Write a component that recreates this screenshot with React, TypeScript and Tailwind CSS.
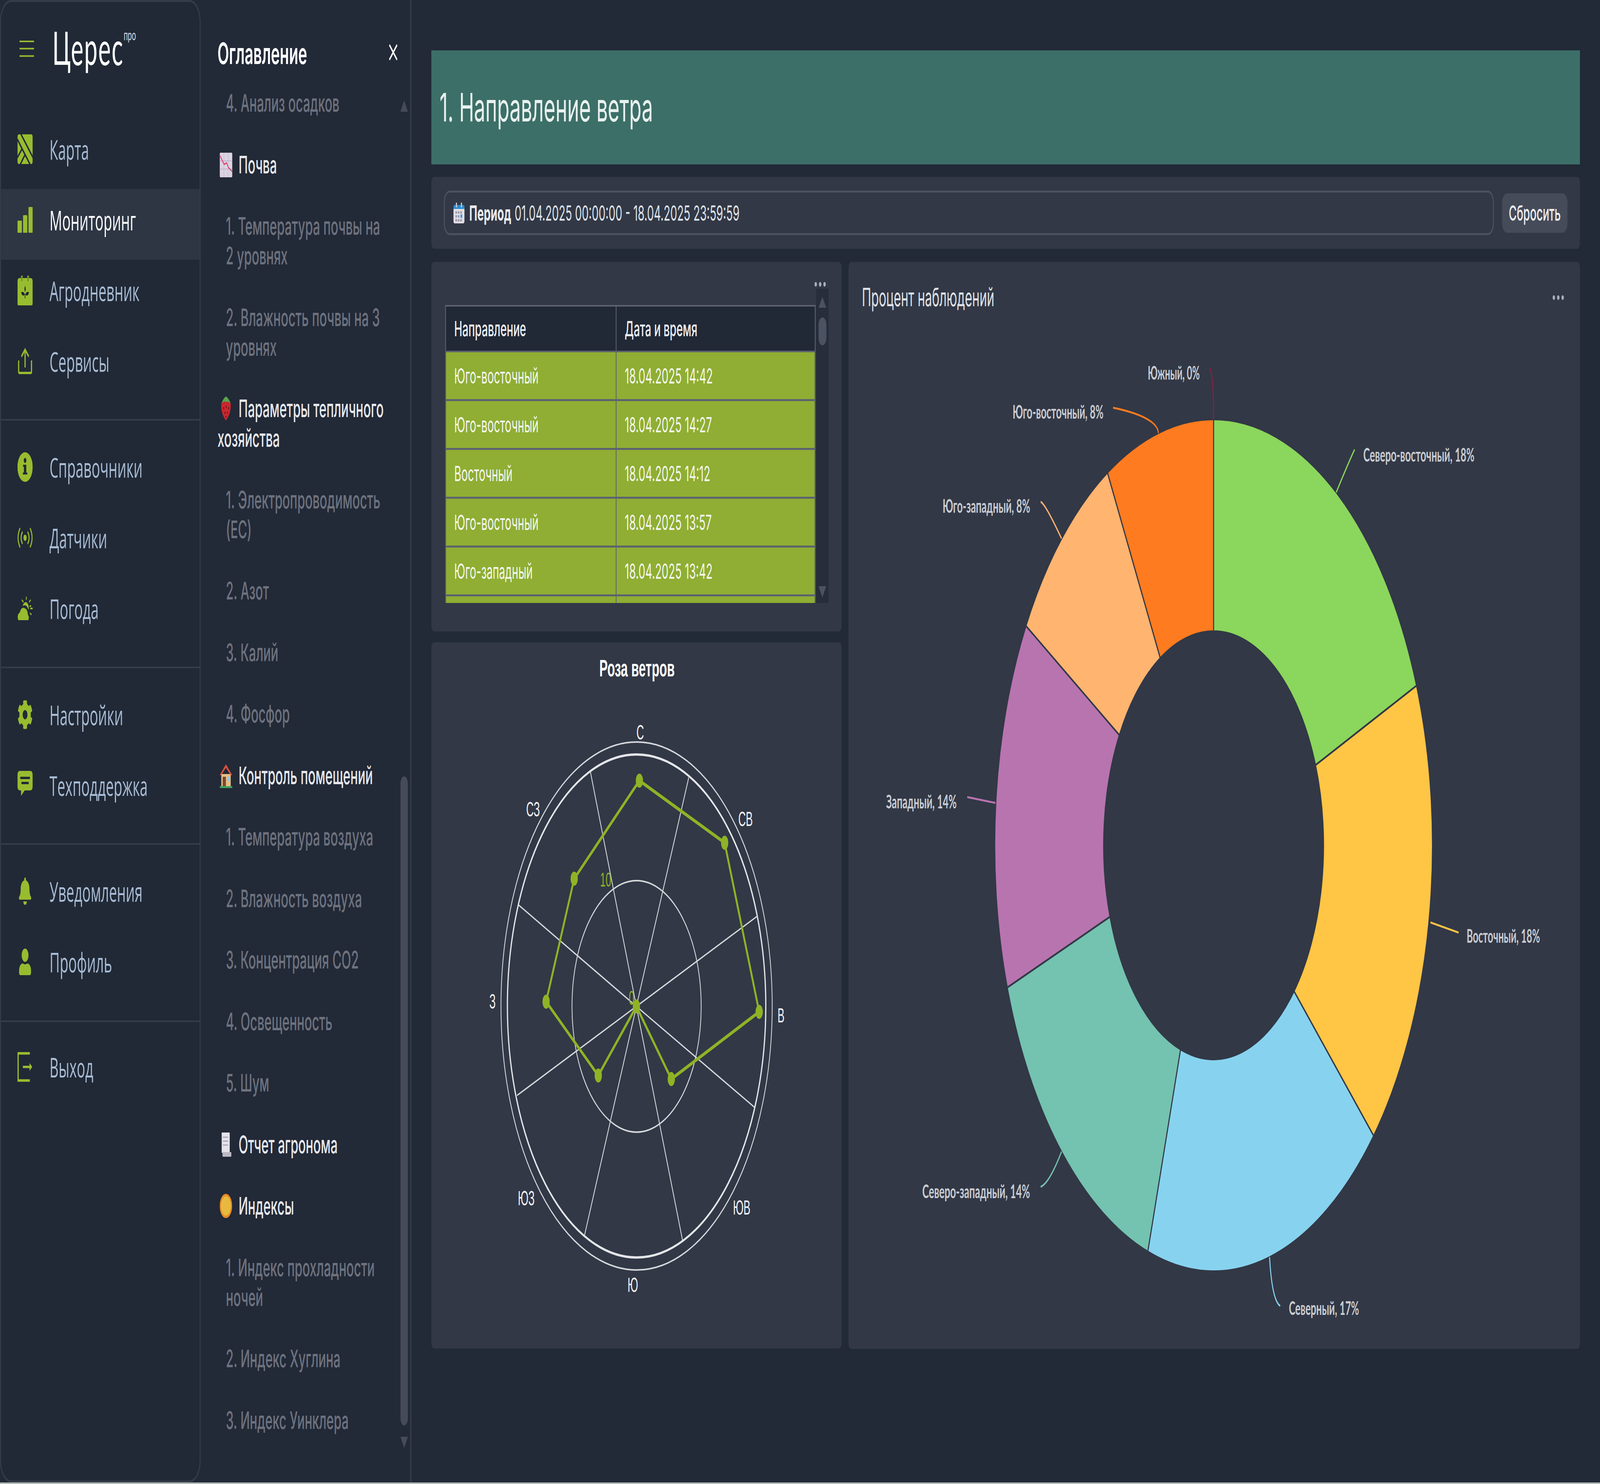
import React from 'react';
import { FaBell, FaCog, FaUser } from 'react-icons/fa';

const G = '#98bc2f';
const D = '#212936';

const Ic = ({ children, vb = '0 0 76 76', h = 76 }: { children: React.ReactNode; vb?: string; h?: number }) => (
  <svg viewBox={vb} width={76} height={h} className="shrink-0">{children}</svg>
);

const MapIcon = () => (
  <Ic>
    <rect width="76" height="76" rx="7" fill={G} />
    <g stroke={D} strokeWidth="5.5" fill="none">
      <path d="M16 -2 L78 60" />
      <path d="M0 13 L23 37 L-1 60" />
      <path d="M13 78 L38 52 L64 78" />
      <path d="M23 37 L38 52" />
    </g>
  </Ic>
);
const BarsIcon = () => (
  <Ic vb="0 0 76 66" h={66}>
    <rect x="0" y="35" width="22" height="31" rx="2" fill={G} />
    <rect x="28" y="21" width="21" height="45" rx="2" fill={G} />
    <rect x="55" y="0" width="21" height="66" rx="2" fill={G} />
  </Ic>
);
const DiaryIcon = () => (
  <Ic>
    <path d="M10 6 H66 Q76 6 76 16 V70 Q76 76 70 76 H6 Q0 76 0 70 V16 Q0 6 10 6 Z" fill={G} />
    <path d="M22 0 V16 M53 0 V16" stroke={G} strokeWidth="8" />
    <path d="M22 2 V14 M53 2 V14" stroke={D} strokeWidth="2" />
    <path d="M38 26 Q44 34 38 42 Q32 34 38 26 Z" fill={D} />
    <path d="M18 43 Q30 38 37 48 Q26 56 18 43 Z M58 43 Q46 38 39 48 Q50 56 58 43 Z" fill={D} />
    <path d="M38 48 V58" stroke={D} strokeWidth="3" />
  </Ic>
);
const UploadIcon = () => (
  <Ic vb="0 0 76 68" h={68}>
    <path d="M6 32 V60 Q6 64 10 64 H66 Q70 64 70 60 V32" fill="none" stroke={G} strokeWidth="6" />
    <path d="M38 50 V5 M20 22 L38 4 L56 22" fill="none" stroke={G} strokeWidth="6" />
  </Ic>
);
const InfoIcon = () => (
  <Ic>
    <circle cx="38" cy="38" r="38" fill={G} />
    <rect x="32" y="32" width="12" height="24" rx="1" fill={D} />
    <rect x="28" y="32" width="10" height="5" fill={D} />
    <rect x="27" y="52" width="22" height="5" fill={D} />
    <circle cx="38" cy="21" r="6.5" fill={D} />
  </Ic>
);
const SensorIcon = () => (
  <Ic vb="0 0 76 54" h={54}>
    <circle cx="38" cy="27" r="8" fill={G} />
    <g fill="none" stroke={G} strokeWidth="5" strokeLinecap="round">
      <path d="M24 13 Q12 27 24 41" />
      <path d="M52 13 Q64 27 52 41" />
      <path d="M12 4 Q-6 27 12 50" />
      <path d="M64 4 Q82 27 64 50" />
    </g>
  </Ic>
);
const WeatherIcon = () => (
  <Ic vb="0 0 76 60" h={60}>
    <path d="M4 60 Q-4 46 12 40 Q20 24 38 30 Q50 32 52 46 Q60 52 54 60 Z" fill={G} />
    <path d="M26 24 Q32 12 44 14 Q58 18 56 34 Q50 28 46 24 Q36 20 26 24 Z" fill={G} />
    <path d="M44 0 V8 M22 8 L30 14 M66 8 L58 14 M64 30 H76 M62 42 L70 46 M60 24 H68" stroke={G} strokeWidth="4" fill="none" />
  </Ic>
);
const ChatIcon = () => (
  <Ic vb="0 0 76 74" h={74}>
    <path d="M12 0 H64 Q76 0 76 12 V38 Q76 50 64 50 H36 L18 64 L18 50 H12 Q0 50 0 38 V12 Q0 0 12 0 Z" fill={G} />
    <rect x="14" y="15" width="48" height="6" fill={D} />
    <rect x="20" y="28" width="36" height="6" fill={D} />
  </Ic>
);
const ExitIcon = () => (
  <Ic>
    <path d="M63 3 H3 V73 H63" fill="none" stroke={G} strokeWidth="7" transform="scale(0.98 1)" />
    <path d="M27 38 H66" stroke={G} strokeWidth="6" />
    <path d="M60 28 L74 38 L60 48 Z" fill={G} />
  </Ic>
);

const groups: { label: string; icon: React.ReactNode; active?: boolean }[][] = [
  [
    { label: 'Карта', icon: <MapIcon /> },
    { label: 'Мониторинг', icon: <BarsIcon />, active: true },
    { label: 'Агродневник', icon: <DiaryIcon /> },
    { label: 'Сервисы', icon: <UploadIcon /> },
  ],
  [
    { label: 'Справочники', icon: <InfoIcon /> },
    { label: 'Датчики', icon: <SensorIcon /> },
    { label: 'Погода', icon: <WeatherIcon /> },
  ],
  [
    { label: 'Настройки', icon: <FaCog size={76} color={G} className="shrink-0" /> },
    { label: 'Техподдержка', icon: <ChatIcon /> },
  ],
  [
    { label: 'Уведомления', icon: <FaBell size={70} color={G} className="shrink-0 mx-[3px]" /> },
    { label: 'Профиль', icon: <FaUser size={68} color={G} className="shrink-0 mx-[4px]" /> },
  ],
  [{ label: 'Выход', icon: <ExitIcon /> }],
];

const groupCls = [
  'pb-[46px] border-b-[4px] border-[#353c4a]',
  'pt-[40px] pb-[47px] border-b-[4px] border-[#353c4a]',
  'pt-[40px] pb-[46px] border-b-[4px] border-[#353c4a]',
  'pt-[40px] pb-[48px] border-b-[4px] border-[#353c4a]',
  'pt-[36px]',
];

const Sidebar = () => (
  <aside className="w-[1000px] h-full shrink-0 rounded-[56px] border-[5px] border-[#353c4a] bg-[#212936] flex flex-col">
    <div className="h-[298px] shrink-0 flex items-start">
      <svg width="73" height="42" viewBox="0 0 73 42" className="ml-[92px] mt-[99px] shrink-0">
        <path d="M0 2 H73 M0 20.5 H73 M0 39.5 H73" stroke={G} strokeWidth="4" />
      </svg>
      <div className="ml-[91px] mt-[58px] flex items-start">
        <span className="font-['Lato',sans-serif] font-normal text-[118px] leading-[118px] text-white tracking-[4px]">Церес</span>
        <span className="font-['Lato',sans-serif] text-[36px] leading-[36px] text-[#d8dadf] mt-[8px]">про</span>
      </div>
    </div>
    {groups.map((g, i) => (
      <div key={i} className={groupCls[i]}>
        {g.map((n) => (
          <div key={n.label} className={`h-[181px] flex items-center pl-[82px] pb-[24px] ${n.active ? 'bg-[#2e3644]' : ''}`}>
            <div className="w-[76px] flex justify-center shrink-0">{n.icon}</div>
            <span className={`ml-[84px] font-['Open_Sans',sans-serif] text-[70px] leading-none ${n.active ? 'text-white' : 'text-[#a9bdd6]'}`}>{n.label}</span>
          </div>
        ))}
      </div>
    ))}
  </aside>
);

const EmojiBox = ({ children }: { children: React.ReactNode }) => (
  <svg viewBox="0 0 63 63" className="inline-block w-[63px] h-[63px] ml-[11px] mr-[31px] align-[-10px]">{children}</svg>
);
const Chart = () => (
  <EmojiBox>
    <rect width="63" height="63" rx="4" fill="#dcd3e2" />
    <path d="M21 0 V63 M42 0 V63 M0 21 H63 M0 42 H63" stroke="#b5a9c0" strokeWidth="1.5" />
    <path d="M2 8 L22 30 L34 26 L44 38 L62 48" stroke="#d9436e" strokeWidth="3.5" fill="none" />
  </EmojiBox>
);
const Berry = () => (
  <EmojiBox>
    <path d="M8 18 Q31 8 55 18 Q58 42 31 62 Q4 42 8 18 Z" fill="#c8282e" />
    <path d="M8 18 Q20 4 31 0 Q44 4 55 18 Q42 12 31 14 Q20 12 8 18 Z" fill="#5aa34a" />
    <g fill="#5c1015">
      <circle cx="20" cy="30" r="2.5" /><circle cx="32" cy="27" r="2.5" /><circle cx="44" cy="30" r="2.5" />
      <circle cx="26" cy="42" r="2.5" /><circle cx="38" cy="42" r="2.5" /><circle cx="31" cy="52" r="2.5" />
    </g>
  </EmojiBox>
);
const House = () => (
  <EmojiBox>
    <rect x="8" y="27" width="47" height="32" fill="#e8bd85" />
    <path d="M31 2 L0 30 L8 30 L31 11 L55 30 L63 30 Z" fill="#d8513c" />
    <rect x="15" y="34" width="16" height="25" fill="#7a4a2e" />
    <rect x="38" y="34" width="13" height="11" fill="#8fc8e6" />
    <rect y="58" width="63" height="5" fill="#3fa35c" />
  </EmojiBox>
);
const Scroll = () => (
  <EmojiBox>
    <path d="M10 0 H50 V52 H10 Z" fill="#e5e3eb" />
    <path d="M16 12 H42 M16 22 H42 M16 32 H42" stroke="#aaa6b4" strokeWidth="3" />
    <rect x="14" y="50" width="44" height="12" rx="2" fill="#bdb9c6" />
  </EmojiBox>
);
const Sun = () => (
  <EmojiBox>
    <circle cx="31" cy="31" r="31" fill="#e88a26" />
    <circle cx="31" cy="31" r="25" fill="#e8b93f" />
  </EmojiBox>
);

type T = { lines: string[]; head?: boolean; emoji?: React.ReactNode };
const toc: T[] = [
  { lines: ['4. Анализ осадков'] },
  { lines: ['Почва'], head: true, emoji: <Chart /> },
  { lines: ['1. Температура почвы на', '2 уровнях'] },
  { lines: ['2. Влажность почвы на 3', 'уровнях'] },
  { lines: ['Параметры тепличного', 'хозяйства'], head: true, emoji: <Berry /> },
  { lines: ['1. Электропроводимость', '(EC)'] },
  { lines: ['2. Азот'] },
  { lines: ['3. Калий'] },
  { lines: ['4. Фосфор'] },
  { lines: ['Контроль помещений'], head: true, emoji: <House /> },
  { lines: ['1. Температура воздуха'] },
  { lines: ['2. Влажность воздуха'] },
  { lines: ['3. Концентрация CO2'] },
  { lines: ['4. Освещенность'] },
  { lines: ['5. Шум'] },
  { lines: ['Отчет агронома'], head: true, emoji: <Scroll /> },
  { lines: ['Индексы'], head: true, emoji: <Sun /> },
  { lines: ['1. Индекс прохладности', 'ночей'] },
  { lines: ['2. Индекс Хуглина'] },
  { lines: ['3. Индекс Уинклера'] },
];

const Toc = () => (
  <section className="w-[1050px] h-full shrink-0 border-r-[5px] border-[#3a4150] flex flex-col">
    <div className="h-[226px] shrink-0 flex justify-between items-start pl-[84px] pr-[63px] pt-[94px]">
      <span className="text-[75px] leading-[86px] font-semibold text-white">Оглавление</span>
      <svg width="44" height="44" viewBox="0 0 44 44" className="mt-[18px]">
        <path d="M3 3 L41 41 M41 3 L3 41" stroke="#fff" strokeWidth="5.5" />
      </svg>
    </div>
    <div className="flex justify-between pl-[84px] pr-[12px]">
      <div className="flex flex-col gap-[81.5px]">
        {toc.map((t) => (
          <div
            key={t.lines[0]}
            className={`text-[62px] leading-[76px] ${t.head ? 'text-[#e6e8ec] font-medium' : 'pl-[42px] text-[#6d727e] font-medium'}`}
          >
            {t.emoji}
            {t.lines[0]}
            {t.lines[1] && <br />}
            {t.lines[1]}
          </div>
        ))}
      </div>
      <div className="w-[37px] flex flex-col items-center mt-[31px]">
        <svg width="37" height="29" viewBox="0 0 37 29"><path d="M18.5 0 L37 29 H0 Z" fill="#454b59" /></svg>
        <div className="mt-[1702px] w-[37px] h-[1662px] rounded-[19px] bg-[#454b59]" />
        <svg width="37" height="29" viewBox="0 0 37 29" className="mt-[29px]"><path d="M18.5 29 L37 0 H0 Z" fill="#454b59" /></svg>
      </div>
    </div>
  </section>
);

const rows = [
  ['Юго-восточный', '18.04.2025 14:42'],
  ['Юго-восточный', '18.04.2025 14:27'],
  ['Восточный', '18.04.2025 14:12'],
  ['Юго-восточный', '18.04.2025 13:57'],
  ['Юго-западный', '18.04.2025 13:42'],
  ['', ''],
];

const Dots = () => (
  <svg width="56" height="12" viewBox="0 0 56 12">
    <circle cx="6" cy="6" r="6" fill="#aab0ba" /><circle cx="28" cy="6" r="6" fill="#aab0ba" /><circle cx="50" cy="6" r="6" fill="#aab0ba" />
  </svg>
);

const TablePanel = () => (
  <div className="relative h-[946px] shrink-0 bg-[#323846] rounded-[14px] pl-[69px] pt-[68px]">
    <div className="absolute left-[1908px] top-[51px] w-[60px] flex justify-center"><Dots /></div>
    <div className="flex items-start">
      <div className="w-[1846px] h-[763px] mt-[42px] overflow-hidden border-x-[4px] border-t-[4px] border-[#5c6270]">
        <div className="h-[117px] flex bg-[#212836] border-b-[4px] border-[#5c6270] text-[54px] font-medium text-[#eef0f3]">
          <div className="w-[850px] border-r-[4px] border-[#5c6270] flex items-center pl-[41px]">Направление</div>
          <div className="flex-1 flex items-center pl-[41px]">Дата и время</div>
        </div>
        {rows.map((r, i) => (
          <div key={i} className="h-[125px] flex bg-[#8fae33] border-b-[5px] border-[#5c6270] text-[54px] text-[#f4f6ef]">
            <div className="w-[850px] border-r-[4px] border-[#5c6270] flex items-center pl-[41px]">{r[0]}</div>
            <div className="flex-1 flex items-center pl-[41px]">{r[1]}</div>
          </div>
        ))}
      </div>
      <div className="ml-[3px] w-[62px] h-[805px] bg-[#262d3b] flex flex-col items-center pt-[21px]">
        <svg width="38" height="28" viewBox="0 0 38 28"><path d="M19 0 L38 28 H0 Z" fill="#4b5261" /></svg>
        <div className="mt-[25px] w-[39px] h-[71px] rounded-[19px] bg-[#4b5261]" />
        <svg width="38" height="29" viewBox="0 0 38 29" className="mt-[617px]"><path d="M19 29 L38 0 H0 Z" fill="#4b5261" /></svg>
      </div>
    </div>
  </div>
);

const SP = "'Liberation Sans', Arial, sans-serif";
const cx = 3172, cy = 2577;
const spokes: [number, number][] = [[3433, 1991], [3772, 2347], [3760, 2835], [3402, 3176], [2914, 3162], [2577, 2805], [2584, 2317], [2943, 1977]];
const pts: [number, number][] = [[3187, 1999], [3612, 2158], [3784, 2591], [3346, 2763], [3172, 2577], [2982, 2754], [2722, 2565], [2862, 2250]];
const compass: [string, number, number][] = [['С', 3191, 1874], ['СВ', 3716, 2096], ['В', 3893, 2599], ['ЮВ', 3697, 3091], ['Ю', 3154, 3289], ['ЮЗ', 2623, 3067], ['З', 2455, 2563], ['СЗ', 2657, 2071]];

const RosePanel = () => (
  <div className="h-[1808px] shrink-0 bg-[#323846] rounded-[14px] overflow-hidden">
    <svg viewBox="2150 1645 2045 1808" className="block w-full h-full">
      <text x="3175" y="1732" textAnchor="middle" fontFamily={SP} fontWeight="700" fontSize="62" fill="#fff" textLength="376" lengthAdjust="spacingAndGlyphs">Роза ветров</text>
      <circle cx="3173" cy="2576" r="676" fill="none" stroke="#d5d7db" strokeWidth="4" />
      <circle cx="3173" cy="2576" r="644" fill="none" stroke="#e4e6e9" strokeWidth="6" />
      <circle cx="3173" cy="2577" r="322" fill="none" stroke="#d5d7db" strokeWidth="4" />
      {spokes.map(([x, y], i) => <line key={i} x1={cx} y1={cy} x2={x} y2={y} stroke="#d5d7db" strokeWidth="4" />)}
      <polygon points={pts.map((p) => p.join(',')).join(' ')} fill="none" stroke="#8fb326" strokeWidth="9" strokeLinejoin="round" />
      {pts.map(([x, y], i) => <circle key={i} cx={x} cy={y} r="18" fill="#8fb326" />)}
      <text x="3019" y="2270" textAnchor="middle" fontFamily={SP} fontSize="50" fill="#8fb326">10</text>
      <text x="3148" y="2573" textAnchor="middle" fontFamily={SP} fontSize="50" fill="#8fb326">0</text>
      {compass.map(([l, x, y]) => <text key={l} x={x} y={y + 19} textAnchor="middle" fontFamily={SP} fontSize="52" fill="#f2f3f5">{l}</text>)}
    </svg>
  </div>
);

const pc = [6049, 2164.5], R = 1091, r0 = 548;
const polar = (rad: number, deg: number) => {
  const a = (deg * Math.PI) / 180;
  return [pc[0] + rad * Math.sin(a), pc[1] - rad * Math.cos(a)];
};
const slice = (a: number, b: number) => {
  const [x1, y1] = polar(R, a), [x2, y2] = polar(R, b), [x3, y3] = polar(r0, b), [x4, y4] = polar(r0, a);
  return `M${x1} ${y1} A${R} ${R} 0 0 1 ${x2} ${y2} L${x3} ${y3} A${r0} ${r0} 0 0 0 ${x4} ${y4} Z`;
};
const slices: [number, number, string][] = [
  [0, 68, '#8bd65c'], [68, 133, '#ffc545'], [133, 197.5, '#87d3ef'], [197.5, 250.5, '#74c2b0'],
  [250.5, 301, '#b874af'], [301, 331, '#ffb470'], [331, 360, '#ff7b1f'],
];
const labels: [string, number, number, number, string, string][] = [
  ['Северо-восточный, 18%', 6795, 1165, 554, 'M6752 1151 Q6725 1180 6660 1261', '#8bd65c'],
  ['Восточный, 18%', 7310, 2397, 366, 'M7130 2362 L7270 2388', '#ffc545'],
  ['Северный, 17%', 6424, 3350, 350, 'M6328 3219 Q6340 3330 6381 3344', '#87d3ef'],
  ['Северо-западный, 14%', 4597, 3051, 537, 'M5291 2949 Q5230 3030 5187 3039', '#74c2b0'],
  ['Западный, 14%', 4417, 2053, 351, 'M4821 2041 L4961 2056', '#b874af'],
  ['Юго-западный, 8%', 4698, 1296, 437, 'M5187 1285 Q5210 1290 5291 1379', '#ffb470'],
  ['Юго-восточный, 8%', 5047, 1055, 453, 'M5548 1044 Q5770 1068 5774 1109', '#ff7b1f'],
  ['Южный, 0%', 5721, 955, 259, 'M6030 944 Q6049 960 6049 1073', '#8b1f45'],
];

const PiePanel = () => (
  <div className="flex-1 bg-[#323846] rounded-[14px] overflow-hidden">
    <svg viewBox="4229 671 3646 2783" className="block w-full h-full">
      <text x="4296" y="784" fontFamily="Inter, sans-serif" fontSize="64" fill="#dfe2e6" textLength="660" lengthAdjust="spacingAndGlyphs">Процент наблюдений</text>
      <circle cx="7745" cy="762" r="6" fill="#aab0ba" /><circle cx="7767" cy="762" r="6" fill="#aab0ba" /><circle cx="7789" cy="762" r="6" fill="#aab0ba" />
      {slices.map(([a, b, c]) => <path key={c} d={slice(a, b)} fill={c} stroke="#323846" strokeWidth="5" />)}
      {labels.map(([t, x, y, w, d, c]) => (
        <g key={t}>
          <path d={d} fill="none" stroke={c} strokeWidth="5" />
          <text x={x} y={y + 17} fontFamily="Lato, sans-serif" fontWeight="700" fontSize="48" fill="#c9ccd2" textLength={w} lengthAdjust="spacingAndGlyphs">{t}</text>
        </g>
      ))}
    </svg>
  </div>
);

const CalendarEmoji = () => (
  <svg viewBox="0 0 55 53" className="w-[55px] h-[53px] shrink-0">
    <rect y="6" width="55" height="47" rx="6" fill="#e0dde6" />
    <path d="M0 16 V12 Q0 6 6 6 H49 Q55 6 55 12 V16 Z" fill="#2b8ccf" />
    <rect x="12" y="0" width="6" height="12" fill="#c9c6d0" /><rect x="37" y="0" width="6" height="12" fill="#c9c6d0" />
    <g fill="#9c98a6">
      <rect x="10" y="22" width="8" height="6" /><rect x="22" y="22" width="8" height="6" /><rect x="34" y="22" width="8" height="6" />
      <rect x="10" y="32" width="8" height="6" /><rect x="22" y="32" width="8" height="6" />
      <rect x="10" y="42" width="8" height="6" /><rect x="22" y="42" width="8" height="6" /><rect x="34" y="42" width="8" height="6" />
    </g>
    <rect x="35" y="30" width="9" height="9" fill="#3f9be0" />
  </svg>
);

export default function App() {
  // The browser window can be narrower than the 7975 px design: fit the design to the real window.
  const fit = `scale(${window.innerWidth / 7975}, ${window.innerHeight / 3800})`;
  return (
    <div className="w-screen h-screen overflow-hidden bg-[#222937]">
      <div style={{ transform: fit }} className="origin-top-left w-[7975px] h-[3800px] overflow-hidden bg-[#222937] flex flex-col font-['Inter',sans-serif]">
        <div className="flex flex-1 min-h-0">
          <Sidebar />
          <Toc />
          <main className="flex-1 min-w-0 pl-[100px] pr-[100px] pt-[129px] flex flex-col">
            <div className="h-[292px] shrink-0 bg-[#3c6f68] flex items-center pl-[41px]">
              <h1 className="text-[100px] leading-none text-[#e9f1ee]">1. Направление ветра</h1>
            </div>
            <div className="mt-[32px] h-[184px] shrink-0 bg-[#323846] rounded-[14px] flex items-center pl-[62px] pr-[62px]">
              <div className="flex-1 h-[114px] border-[5px] border-[#4b5160] rounded-[30px] flex items-center pl-[43px]">
                <CalendarEmoji />
                <span className="ml-[24px] text-[54px] font-bold text-[#e9ebee]">Период</span>
                <span className="ml-[17px] text-[54px] text-[#dfe3e8]">01.04.2025 00:00:00 - 18.04.2025 23:59:59</span>
              </div>
              <button className="ml-[41px] w-[326px] h-[101px] rounded-[25px] bg-[#454b59] text-[54px] font-medium text-[#eef0f3]">Сбросить</button>
            </div>
            <div className="mt-[34px] h-[2783px] shrink-0 flex gap-[34px]">
              <div className="w-[2045px] shrink-0 flex flex-col gap-[28px]">
                <TablePanel />
                <RosePanel />
              </div>
              <PiePanel />
            </div>
          </main>
        </div>
        <div className="h-[4px] shrink-0 bg-[#b4bab8]" />
      </div>
    </div>
  );
}
